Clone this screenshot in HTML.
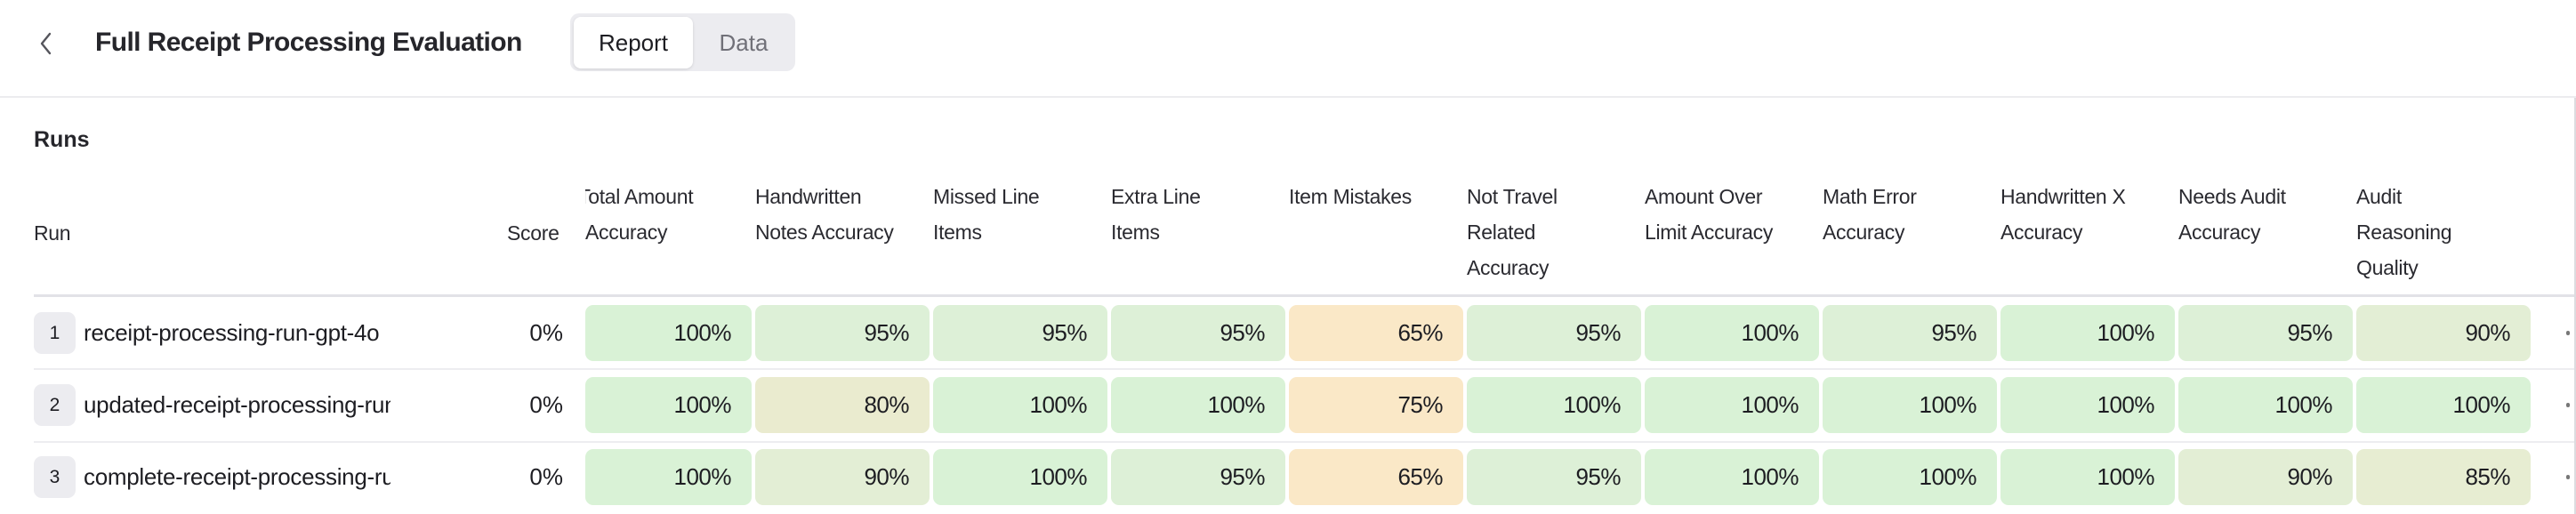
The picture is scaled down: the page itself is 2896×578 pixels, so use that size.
<!DOCTYPE html>
<html><head><meta charset="utf-8"><style>
body{margin:0;width:2896px;height:578px;background:#fff;position:relative;overflow:hidden;font-family:"Liberation Sans",sans-serif;color:#1d1d22}
.a{position:absolute;white-space:nowrap}
.hd{font-size:23px;line-height:40px;color:#2a2a30;letter-spacing:-0.3px}
.c{position:absolute;height:63px;width:196px;border-radius:9px;font-size:26px;line-height:63px;text-align:right;box-sizing:border-box;padding-right:23px;letter-spacing:-0.5px}
.bd{position:absolute;left:38px;width:47px;height:47px;border-radius:9px;background:#ececf0;font-size:21px;line-height:47px;text-align:center}
.nm{position:absolute;left:94px;width:345px;overflow:hidden;white-space:nowrap;font-size:26px;line-height:63px;letter-spacing:-0.3px}
</style></head><body>
<svg class="a" style="left:42px;top:36px" width="20" height="26" viewBox="0 0 20 26"><path d="M14 2 L5 13 L14 24" fill="none" stroke="#55555c" stroke-width="2.4" stroke-linecap="round" stroke-linejoin="round"/></svg>
<div class="a" style="left:107px;top:28px;font-size:30px;line-height:40px;font-weight:bold;letter-spacing:-0.6px;color:#26262b">Full Receipt Processing Evaluation</div>
<div class="a" style="left:641px;top:15px;width:253px;height:65px;background:#ececf0;border-radius:10px"></div>
<div class="a" style="left:645px;top:19px;width:134px;height:58px;background:#fff;border-radius:8px;box-shadow:0 1px 3px rgba(0,0,0,.12);font-size:26px;line-height:58px;text-align:center">Report</div>
<div class="a" style="left:780px;top:19px;width:112px;font-size:26px;line-height:58px;text-align:center;color:#707078">Data</div>
<div class="a" style="left:0;top:108px;width:2896px;height:2px;background:#ececef"></div>
<div class="a" style="left:2894px;top:110px;width:2px;height:468px;background:#dcdce0"></div>
<div class="a" style="left:38px;top:140px;font-size:25px;line-height:34px;font-weight:bold;color:#26262b">Runs</div>
<div class="a" style="left:38px;top:331px;width:2856px;height:3px;background:#e2e2e7"></div>
<div class="a" style="left:38px;top:414px;width:2856px;height:2px;background:#ededf0"></div>
<div class="a" style="left:38px;top:496px;width:2856px;height:2px;background:#ededf0"></div>
<div class="a hd" style="left:38px;top:242px">Run</div>
<div class="a hd" style="left:570px;top:242px">Score</div>
<div id="r"></div>
<script>
var heads=[["Total Amount","Accuracy"],["Handwritten","Notes Accuracy"],["Missed Line","Items"],["Extra Line","Items"],["Item Mistakes"],["Not Travel","Related","Accuracy"],["Amount Over","Limit Accuracy"],["Math Error","Accuracy"],["Handwritten X","Accuracy"],["Needs Audit","Accuracy"],["Audit","Reasoning","Quality"]];
var col={100:"#d9f2d6",95:"#ddf0d7",90:"#e3eed5",85:"#e7edd2",80:"#eaebcf",75:"#fae8c7",65:"#fae8c7"};
var rows=[["receipt-processing-run-gpt-4o",[100,95,95,95,65,95,100,95,100,95,90]],["updated-receipt-processing-run",[100,80,100,100,75,100,100,100,100,100,100]],["complete-receipt-processing-run",[100,90,100,95,65,95,100,100,100,90,85]]];
var s="";
heads.forEach(function(h,i){var x=849+(i-1)*200;
s+='<div class="a hd" style="left:'+(i==0?658:x)+'px;top:201px;'+(i==0?'width:190px;overflow:hidden;text-indent:-8px':'')+'">'+h.join("<br>")+'</div>';});
rows.forEach(function(r,j){var y=343+j*81;
s+='<div class="bd" style="top:'+(y+8)+'px">'+(j+1)+'</div>';
s+='<div class="nm" style="top:'+y+'px">'+r[0]+'</div>';
s+='<div class="a" style="left:560px;width:73px;text-align:right;top:'+y+'px;font-size:26px;line-height:63px">0%</div>';
r[1].forEach(function(v,i){var x=849+(i-1)*200,w=196;if(i==0){x=658;w=187;}
s+='<div class="c" style="left:'+x+'px;top:'+y+'px;width:'+w+'px;background:'+col[v]+'">'+v+'%</div>';});
s+='<div class="a" style="left:2885px;top:'+(y+29)+'px;width:4px;height:5px;border-radius:2px;background:#777"></div>';
});
document.getElementById("r").innerHTML=s;
</script>
</body></html>
